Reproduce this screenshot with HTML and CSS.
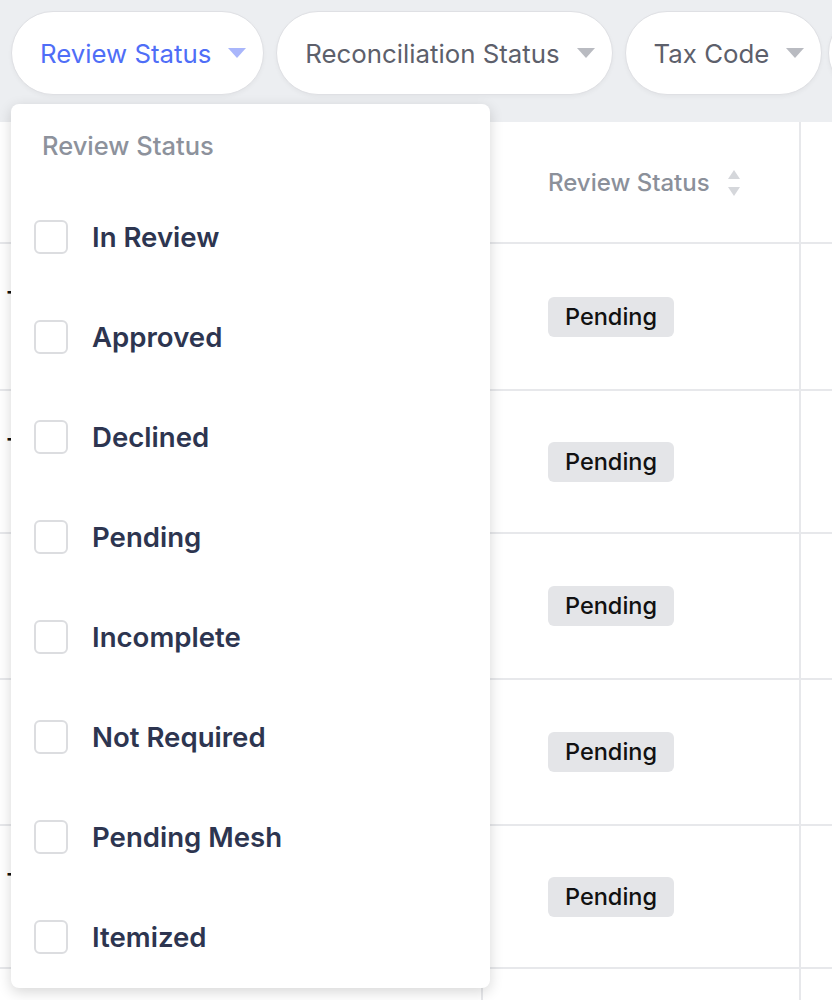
FILE: index.html
```html
<!DOCTYPE html>
<html lang="en">
<head>
  <meta charset="UTF-8">
  <title>Transactions :: Filters</title>
  <link rel="stylesheet" href="styles.css">
</head>
<body>
  <div class="filter-bar">
    <div class="chip active">Review Status <span class="caret"></span></div>
    <div class="chip">Reconciliation Status <span class="caret"></span></div>
    <div class="chip">Tax Code <span class="caret"></span></div>
    <div class="chip more"></div>
  </div>

  <div class="table">
    <div class="cell head"></div>
    <div class="cell head">
      <span class="head-label">Review Status</span>
      <svg class="sort" width="14" height="26" viewBox="0 0 14 26">
        <path d="M7 0 L13 9 H1 Z" fill="#d5d7db"/>
        <path d="M7 26 L13 17 H1 Z" fill="#d5d7db"/>
      </svg>
    </div>
    <div class="cell head last"></div>

    <div class="cell"><span class="stub">-</span></div>
    <div class="cell"><span class="badge">Pending</span></div>
    <div class="cell last"></div>

    <div class="cell"><span class="stub">-</span></div>
    <div class="cell"><span class="badge">Pending</span></div>
    <div class="cell last"></div>

    <div class="cell"></div>
    <div class="cell"><span class="badge">Pending</span></div>
    <div class="cell last"></div>

    <div class="cell"></div>
    <div class="cell"><span class="badge">Pending</span></div>
    <div class="cell last"></div>

    <div class="cell"><span class="stub">-</span></div>
    <div class="cell"><span class="badge">Pending</span></div>
    <div class="cell last"></div>

    <div class="cell short"></div>
    <div class="cell short"></div>
    <div class="cell short last"></div>
  </div>

  <!-- open filter menu -->
  <div class="dropdown">
    <div class="dropdown-title">Review Status</div>
    <label class="option"><span class="box"></span>In Review</label>
    <label class="option"><span class="box"></span>Approved</label>
    <label class="option"><span class="box"></span>Declined</label>
    <label class="option"><span class="box"></span>Pending</label>
    <label class="option"><span class="box"></span>Incomplete</label>
    <label class="option"><span class="box"></span>Not Required</label>
    <label class="option"><span class="box"></span>Pending Mesh</label>
    <label class="option"><span class="box"></span>Itemized</label>
  </div>
</body>
</html>
```

FILE: styles.css
```css
html, body {
  height: 1000px;
}

body {
  margin: 0;
  background: #fff;
  font-family: Inter, "Noto Sans", sans-serif;
  overflow: hidden;
}

.filter-bar {
  display: flex;
  gap: 12px;
  height: 122px;
  padding: 11px;
  box-sizing: border-box;
  background: #eceef1;
  overflow: hidden;
  white-space: nowrap;
}

.chip {
  display: flex;
  align-items: center;
  gap: 17px;
  flex-shrink: 0;
  height: 84px;
  padding: 0 17px 0 28px;
  box-sizing: border-box;
  background: #fff;
  border: 1px solid #dfe0e4;
  border-radius: 42px;
  font-size: 25.8px;
  color: #5d606b;
  box-shadow: 0 2px 4px rgba(0,0,0,0.04);
}

.chip.more {
  width: 160px;
  margin-left: -6px;
}

.chip.active {
  color: #4f6ef7;
}

.caret {
  width: 0;
  height: 0;
  border-left: 9px solid transparent;
  border-right: 9px solid transparent;
  border-top: 10px solid #b9bbc1;
}

.chip.active .caret {
  border-top-color: #a9b6fb;
}

.table {
  display: grid;
  grid-template-columns: 483px 318px 1fr;
  grid-template-rows: 122px 147px 143px 146px 146px 143px 32px;
  height: 878px;
  overflow: hidden;
}

.cell {
  display: flex;
  align-items: center;
  padding-left: 65px;
  border-bottom: 2px solid #e7e8eb;
  border-right: 2px solid #e7e8eb;
  box-sizing: border-box;
  position: relative;
}

.cell.short {
  border-bottom: none;
}

.cell.last {
  border-right: none;
}

.head {
  font-size: 24px;
  font-weight: 500;
  color: #8b909a;
  gap: 17px;
}

.sort {
  margin-top: 2px;
}

.stub {
  position: absolute;
  left: 6px;
  top: 34px;
  font-size: 22px;
  font-weight: 700;
  color: #111;
}

.badge {
  background: #e4e5e8;
  border-radius: 6px;
  padding: 0 17px;
  line-height: 40px;
  font-size: 23.5px;
  font-weight: 500;
  color: #111;
}

.dropdown {
  position: absolute;
  left: 11px;
  top: 104px;
  width: 479px;
  height: 884px;
  background: #fff;
  border-radius: 8px;
  box-shadow: 0 4px 14px rgba(0,0,0,0.16);
  box-sizing: border-box;
  padding-top: 24px;
}

.dropdown-title {
  padding-left: 31px;
  line-height: 36px;
  font-size: 25.5px;
  font-weight: 500;
  color: #8d929c;
  margin-bottom: 23px;
}

.option {
  display: flex;
  align-items: center;
  gap: 24px;
  height: 100px;
  padding-left: 23px;
  font-size: 27.6px;
  font-weight: 600;
  color: #2d3550;
}

.box {
  width: 34px;
  height: 34px;
  box-sizing: border-box;
  border: 2px solid #dcdde0;
  border-radius: 6px;
}
```
